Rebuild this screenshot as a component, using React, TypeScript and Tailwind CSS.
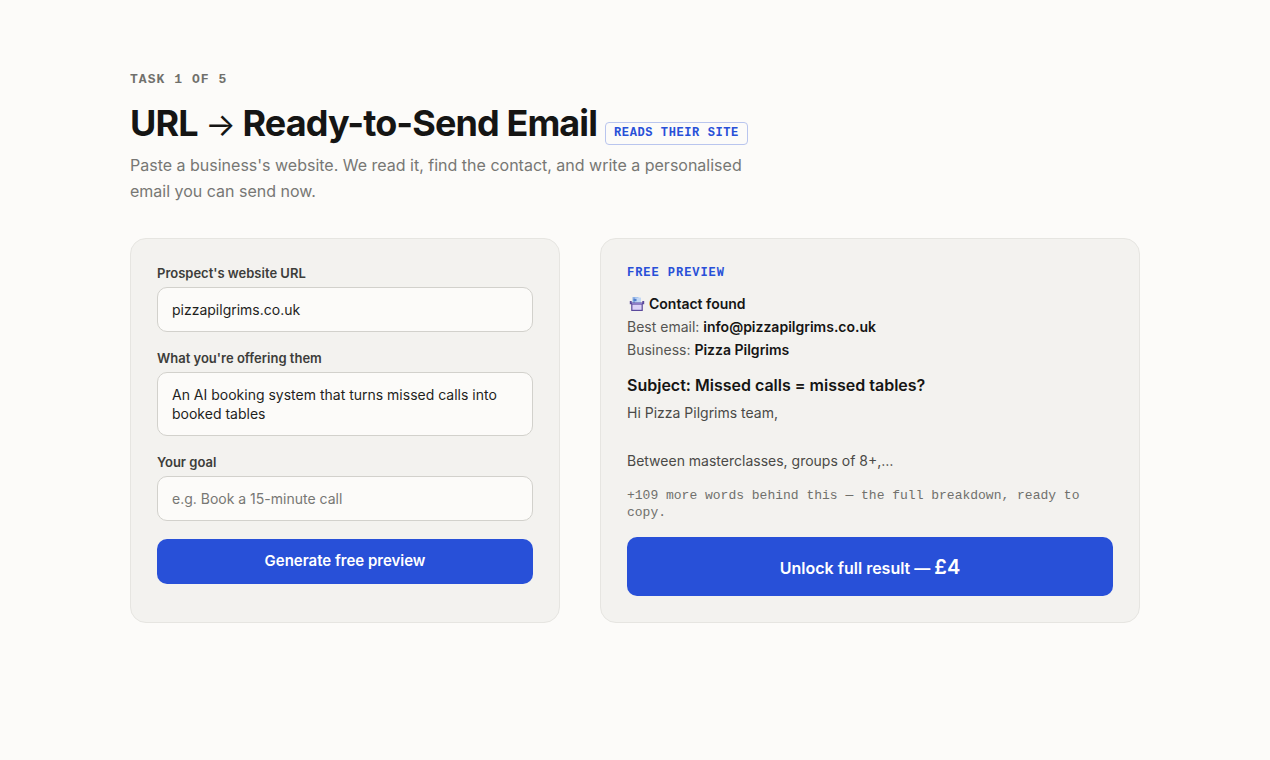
import React from "react";

const ContactIcon: React.FC = () => (
  <svg viewBox="0 0 16 16" className="w-4 h-4 shrink-0" aria-hidden="true">
    <rect x="3.5" y="1" width="6" height="8" rx="0.5" fill="#8fb2e6" />
    <rect x="6" y="1.6" width="6" height="7" rx="0.5" fill="#c3d8f5" />
    <path d="M4.5 2.8h3v2.4h-3z" fill="#4f7fc9" />
    <path d="M0.8 5h1.9v1.6h10.6V5h1.9v3.2h-1.4V15H2.2V8.2H0.8z" fill="#5b4a9c" />
    <path d="M3.4 8.6h9.2v5.2H3.4z" fill="#dcd2f7" />
    <path d="M3 7h10v1.1H3z" fill="#8c7cc9" />
  </svg>
);

const labelClass =
  "block mb-1.5 text-[13px] leading-4 font-semibold text-[#3d3d3a]";

const fieldClass =
  "block w-full rounded-[10px] border border-[#d2d1cc] bg-[#fcfbf9] px-3.5 py-3 text-sm text-[#1f1f1d] placeholder:text-[#777774] outline-none focus:border-[#2850d8]";

const App: React.FC = () => {
  return (
    <main
      className="min-h-screen bg-[#fcfbf9] px-6 pt-[72px] pb-16 text-[#151514]"
      style={{ fontFamily: "Inter, 'Liberation Sans', sans-serif" }}
    >
      <div className="mx-auto w-full max-w-[1010px]">
        <header>
          <p className="font-['Liberation_Mono',monospace] text-[13px] leading-4 font-bold tracking-[0.08em] text-[#70706c]">
            TASK 1 OF 5
          </p>
          <div className="mt-3 flex flex-wrap items-baseline gap-x-2">
            <h1 className="text-4xl leading-[46px] font-bold tracking-tight">
              URL <span className="text-[32px] font-normal">→</span>{" "}
              Ready-to-Send Email
            </h1>
            <span className="rounded border border-[#b9c5ee] px-2 py-0.5 font-['Liberation_Mono',monospace] text-xs leading-[17px] font-bold tracking-wider text-[#2850d8]">
              READS THEIR SITE
            </span>
          </div>
          <p className="mt-1 max-w-[640px] text-base leading-[26px] text-[#777774]">
            Paste a business's website. We read it, find the contact, and write
            a personalised email you can send now.
          </p>
        </header>

        <div className="mt-[34px] grid gap-10 md:grid-cols-[43fr_54fr]">
          <form
            className="rounded-2xl border border-[#e6e5e1] bg-[#f3f2ef] p-[26px]"
            onSubmit={(e) => e.preventDefault()}
          >
            <div className="mb-[18px]">
              <label htmlFor="website" className={labelClass}>
                Prospect's website URL
              </label>
              <input
                id="website"
                type="text"
                defaultValue="pizzapilgrims.co.uk"
                className={`${fieldClass} h-[45px]`}
              />
            </div>
            <div className="mb-[18px]">
              <label htmlFor="offer" className={labelClass}>
                What you're offering them
              </label>
              <textarea
                id="offer"
                rows={2}
                defaultValue="An AI booking system that turns missed calls into booked tables"
                className={`${fieldClass} h-16 resize-none overflow-hidden leading-[19px]`}
              />
            </div>
            <div className="mb-[18px]">
              <label htmlFor="goal" className={labelClass}>
                Your goal
              </label>
              <input
                id="goal"
                type="text"
                placeholder="e.g. Book a 15-minute call"
                className={`${fieldClass} h-[45px]`}
              />
            </div>
            <button
              type="submit"
              className="h-[45px] w-full rounded-[10px] bg-[#2850d8] text-[15px] font-semibold text-white hover:bg-[#2146c4]"
            >
              Generate free preview
            </button>
          </form>

          <section className="rounded-2xl border border-[#e6e5e1] bg-[#f3f2ef] p-[26px]">
            <p className="font-['Liberation_Mono',monospace] text-xs leading-4 font-bold tracking-[0.08em] text-[#2850d8]">
              FREE PREVIEW
            </p>
            <div className="mt-[11px] text-sm leading-[23px] text-[#555552]">
              <p className="flex items-center gap-1 pl-0.5 font-semibold text-[#151514]">
                <ContactIcon />
                Contact found
              </p>
              <p>
                Best email:{" "}
                <strong className="font-semibold text-[#151514]">
                  info@pizzapilgrims.co.uk
                </strong>
              </p>
              <p>
                Business:{" "}
                <strong className="font-semibold text-[#151514]">
                  Pizza Pilgrims
                </strong>
              </p>
            </div>
            <h2 className="mt-3 text-base leading-6 font-semibold">
              Subject: Missed calls = missed tables?
            </h2>
            <p className="mt-1 text-sm leading-6 whitespace-pre-line text-[#4a4a47]">
              {"Hi Pizza Pilgrims team,\n\nBetween masterclasses, groups of 8+,…"}
            </p>
            <p className="mt-3.5 font-['Liberation_Mono',monospace] text-[13px] leading-[17px] text-[#70706c]">
              +109 more words behind this — the full breakdown, ready to copy.
            </p>
            <button
              type="button"
              className="mt-4 h-[59px] w-full rounded-[10px] bg-[#2850d8] text-base font-semibold text-white hover:bg-[#2146c4]"
            >
              Unlock full result — <span className="text-xl">£4</span>
            </button>
          </section>
        </div>
      </div>
    </main>
  );
};

export default App;
